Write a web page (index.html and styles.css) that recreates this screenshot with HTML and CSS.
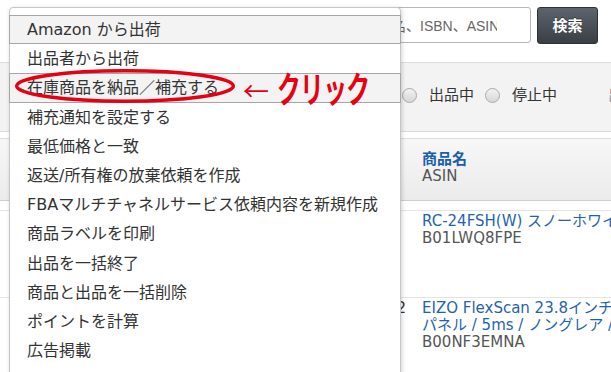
FILE: index.html
```html
<!DOCTYPE html>
<html lang="ja">
<head>
<meta charset="utf-8">
<title>在庫管理</title>
<link rel="stylesheet" href="styles.css">
</head>
<body>
<div class="page">
  <header class="topbar">
    <div class="search"><div class="search-clip">商品名、ISBN、ASIN、JAN</div></div>
    <button class="btn">検索</button>
  </header>

  <div class="filters">
    <label class="radio"><span class="dot"></span>出品中</label>
    <label class="radio second"><span class="dot"></span>停止中</label>
    <span class="sep"></span>
    <span class="more">出品者</span>
  </div>

  <div class="thead">
    <div class="head-cell">
      <div class="title">商品名</div>
      <div class="sub">ASIN</div>
    </div>
  </div>

  <div class="tbody">
    <div class="row">
      <div class="num"></div>
      <div class="name">
        <div class="link">RC-24FSH(W) スノーホワイト</div>
        <div class="asin">B01LWQ8FPE</div>
      </div>
    </div>
    <div class="row">
      <div class="num">2</div>
      <div class="name">
        <div class="link">EIZO FlexScan 23.8インチ モニター (1920×1080 / IPS</div>
        <div class="link">パネル / 5ms / ノングレア / ブラック)</div>
        <div class="asin">B00NF3EMNA</div>
      </div>
    </div>
  </div>

  <ul class="menu">
    <li class="item sel">Amazon から出荷</li>
    <li class="item">出品者から出荷</li>
    <li class="item sel">在庫商品を納品／補充する</li>
    <li class="item">補充通知を設定する</li>
    <li class="item">最低価格と一致</li>
    <li class="item">返送/所有権の放棄依頼を作成</li>
    <li class="item">FBAマルチチャネルサービス依頼内容を新規作成</li>
    <li class="item">商品ラベルを印刷</li>
    <li class="item">出品を一括終了</li>
    <li class="item">商品と出品を一括削除</li>
    <li class="item">ポイントを計算</li>
    <li class="item">広告掲載</li>
  </ul>

  <svg class="ring" width="228" height="40" viewBox="0 0 228 40">
    <ellipse cx="113" cy="20" rx="108.3" ry="15.3" fill="none" stroke="#e60012" stroke-width="3.5"/>
  </svg>
  <div class="callout"><span class="arrow">←</span><span class="click">クリック</span></div>
</div>
</body>
</html>
```

FILE: styles.css
```css
html, body {
  margin: 0;
  padding: 0;
}
body {
  font-family: "DejaVu Sans", "Noto Sans CJK JP", sans-serif;
  color: #333;
  background: #fff;
  width: 611px;
  height: 372px;
  overflow: hidden;
}
.page {
  position: relative;
  width: 611px;
  height: 372px;
  overflow: hidden;
}

/* top search bar */
.topbar {
  display: flex;
  justify-content: flex-end;
  gap: 6px;
  padding: 7px 13px 0 0;
  height: 37px;
}
.search {
  width: 176px;
  height: 36px;
  box-sizing: border-box;
  border: 1px solid #b8b8b8;
  border-radius: 3px;
  padding: 0 33px 0 8px;
  display: flex;
  align-items: center;
  background: #fff;
}
.search-clip {
  flex: 1;
  overflow: hidden;
  white-space: nowrap;
  font-family: "Liberation Sans", "Noto Sans CJK JP", sans-serif;
  font-size: 14px;
  color: #666;
}
.btn {
  width: 61px;
  height: 37px;
  padding: 0 0 2px 0;
  border: 1px solid #2e3237;
  border-radius: 3px;
  background: linear-gradient(#5e646b, #3a3f46);
  color: #fff;
  font-family: "Noto Sans CJK JP", sans-serif;
  font-weight: bold;
  font-size: 15px;
  text-shadow: 0 -1px 0 rgba(0, 0, 0, 0.4);
}

/* filter band */
.filters {
  margin-top: 18px;
  height: 60px;
  padding: 0 0 8px 402px;
  border-top: 1px solid #dcdcdc;
  border-bottom: 1px solid #dcdcdc;
  background: #f3f3f3;
  display: flex;
  align-items: center;
  font-family: "Noto Sans CJK JP", sans-serif;
  font-size: 15px;
  white-space: nowrap;
}
.radio {
  display: flex;
  align-items: center;
}
.radio.second {
  margin-left: 11px;
}
.dot {
  width: 15px;
  height: 15px;
  box-sizing: border-box;
  border: 1px solid #a9a9a9;
  border-radius: 50%;
  background: linear-gradient(#f3f3f3, #d6d6d6);
  margin-right: 12px;
  margin-top: 4px;
}
.sep {
  width: 1px;
  height: 35px;
  margin: 8px 25px 0 26px;
  background: #d8d8d8;
}
.more {
  color: #999;
}

/* table */
.thead {
  margin-top: 6px;
  height: 51px;
  padding: 10px 0 0 422px;
  border-top: 1px solid #dddddd;
  border-bottom: 1px solid #cfcfcf;
  background: linear-gradient(#f7f7f7, #ebebeb);
  font-size: 15px;
  line-height: 18px;
}
.title {
  font-family: "Noto Sans CJK JP", sans-serif;
  font-weight: bold;
  color: #1d5ea8;
}
.sub {
  color: #555;
}
.tbody {
  margin-top: 9px;
  border-top: 1px solid #e4e4e4;
}
.row {
  display: flex;
  height: 87px;
  box-sizing: border-box;
  padding-top: 2px;
  border-bottom: 1px solid #e4e4e4;
  font-size: 15px;
  line-height: 17px;
  white-space: nowrap;
}
.num {
  width: 406px;
  flex: none;
  text-align: right;
  color: #333;
}
.name {
  padding-left: 16px;
}
.link {
  color: #1f63b0;
}
.asin {
  color: #555;
}

/* dropdown menu overlay */
.menu {
  position: absolute;
  left: 9px;
  top: 7px;
  width: 392px;
  height: 380px;
  box-sizing: border-box;
  margin: 0;
  padding: 7px 0 0 0;
  list-style: none;
  background: #fff;
  border: 1px solid #c6c6c6;
  border-radius: 4px 4px 0 0;
  box-shadow: 1px 1px 4px rgba(0, 0, 0, 0.18);
}
.item {
  height: 29.2px;
  box-sizing: border-box;
  margin: 0 -1px;
  padding: 0 0 3px 17px;
  border: 1px solid transparent;
  display: flex;
  align-items: center;
  font-size: 16px;
  color: #333;
  white-space: nowrap;
}
.item.sel {
  border-color: #a6a6a6;
  background: #f3f3f3;
}

/* annotation */
.ring {
  position: absolute;
  left: 12px;
  top: 66px;
}
.callout {
  position: absolute;
  left: 243px;
  top: 71px;
  height: 32px;
  display: flex;
  align-items: center;
  color: #e60012;
  white-space: nowrap;
  font-family: "Noto Sans CJK JP", sans-serif;
}
.arrow {
  display: inline-block;
  font-size: 26px;
  line-height: 32px;
  width: 26px;
  margin: 6px 8px 0 0;
}
.click {
  display: inline-block;
  font-size: 36px;
  line-height: 32px;
  font-weight: bold;
  transform: scaleX(0.66);
  transform-origin: left center;
  letter-spacing: -1px;
}
```
